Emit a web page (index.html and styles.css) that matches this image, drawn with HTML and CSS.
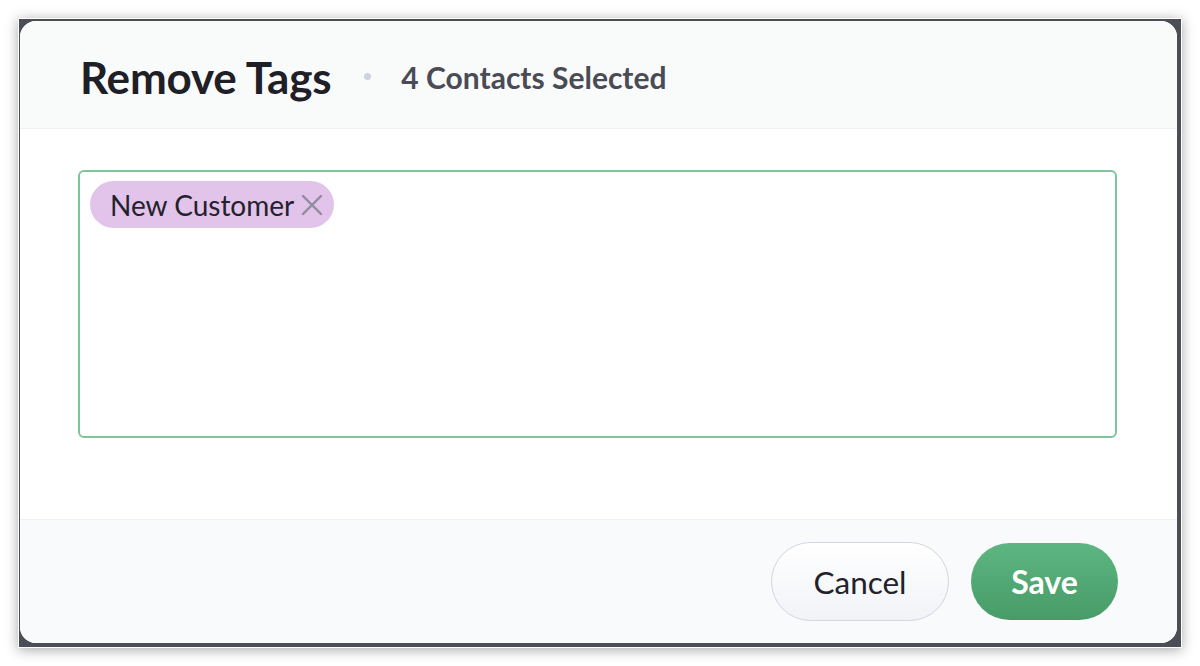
FILE: index.html
```html
<!DOCTYPE html>
<html>
<head>
<meta charset="utf-8">
<link rel="stylesheet" href="styles.css">
</head>
<body>
<div class="frame">
  <div class="dialog">
    <div class="header">
      <h1 class="title">Remove Tags</h1>
      <span class="dot"></span>
      <span class="subtitle">4 Contacts Selected</span>
    </div>
    <div class="body">
      <div class="tagbox">
        <span class="tag">New Customer<svg class="tag-x" viewBox="0 0 22 22" width="22" height="22"><path d="M2 2 L20 20 M20 2 L2 20" stroke="#8e8b9c" stroke-width="2.4" stroke-linecap="round" fill="none"/></svg></span>
      </div>
    </div>
    <div class="footer">
      <button class="btn btn-cancel">Cancel</button>
      <button class="btn btn-save">Save</button>
    </div>
  </div>
</div>
</body>
</html>
```
FILE: styles.css
```css
html, body {
  margin: 0;
  padding: 0;
  background: #ffffff;
}
body {
  padding: 18px;
  font-family: Lato, "Open Sans", sans-serif;
}
.frame {
  box-sizing: border-box;
  width: 1164px;
  height: 630px;
  border: 1px solid #ffffff;
  background: #4b4d57;
  padding: 2px 3px 3px 1px;
  box-shadow: 0 2px 12px rgba(0, 0, 0, 0.35);
}
.dialog {
  box-sizing: border-box;
  width: 1157px;
  height: 622px;
  border-radius: 16px;
  background: #ffffff;
  overflow: hidden;
  display: flex;
  flex-direction: column;
}
.header {
  box-sizing: border-box;
  height: 108px;
  flex: none;
  background: #f9fbfb;
  border-bottom: 1px solid #edf0f4;
  display: flex;
  align-items: center;
  padding: 4px 0 0 60px;
}
.title {
  margin: 0;
  font-size: 44px;
  font-weight: 700;
  color: #1f2027;
  letter-spacing: -0.2px;
}
.dot {
  width: 7px;
  height: 7px;
  border-radius: 50%;
  background: #cdd2dc;
  margin: 0 30px 0 33px;
}
.subtitle {
  font-size: 30px;
  font-weight: 700;
  color: #4a4b55;
}
.body {
  flex: none;
  height: 390px;
  box-sizing: border-box;
  padding: 41px 60px 0 58px;
}
.tagbox {
  box-sizing: border-box;
  height: 268px;
  border: 2px solid #7ec59b;
  border-radius: 6px;
  padding: 9px 10px;
}
.tag {
  display: inline-flex;
  align-items: center;
  height: 47px;
  box-sizing: border-box;
  padding: 0 11px 0 20px;
  border-radius: 24px;
  background: #e2c3ea;
  font-size: 28px;
  color: #23222b;
}
.tag-x {
  margin-left: 7px;
}
.footer {
  flex: 1;
  background: #f9fafb;
  border-top: 1px solid #edf0f4;
  display: flex;
  align-items: center;
  justify-content: flex-end;
  gap: 22px;
  padding: 0 59px 0 0;
}
.btn {
  font-family: Lato, "Open Sans", sans-serif;
  border-radius: 40px;
  cursor: pointer;
  padding: 0;
}
.btn-cancel {
  width: 178px;
  height: 79px;
  border: 1.5px solid #d1d6df;
  background: linear-gradient(#ffffff, #f1f3f7);
  color: #23222b;
  font-weight: 400;
  font-size: 31.5px;
}
.btn-save {
  width: 147px;
  height: 77px;
  border: none;
  background: linear-gradient(#5db681, #479b67);
  color: #ffffff;
  font-weight: 700;
  font-size: 32px;
}
```
